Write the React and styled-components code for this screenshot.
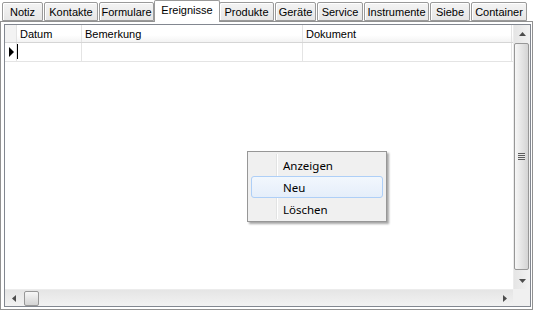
import React from "react";
import styled, { createGlobalStyle } from "styled-components";

const GlobalStyle = createGlobalStyle`
  html, body {
    margin: 0;
    padding: 0;
    background: #ffffff;
  }
  body {
    font-family: "Liberation Sans", Arial, sans-serif;
    font-size: 11px;
    color: #000;
  }
`;

const Page = styled.div`
  position: relative;
  width: 535px;
  height: 311px;
  overflow: hidden;
`;

const TabStrip = styled.div`
  display: flex;
  align-items: flex-end;
  height: 21px;
  padding-left: 2px;
  position: relative;
  z-index: 2;
`;

const Tab = styled.div`
  box-sizing: border-box;
  width: ${(p) => p.$w}px;
  height: ${(p) => (p.$active ? 22 : 19)}px;
  margin: ${(p) => (p.$active ? "0 -1px -1px -1px" : "0 1px 0 0")};
  border: 1px solid #9a9a9a;
  border-bottom: ${(p) => (p.$active ? "none" : "1px solid #9a9a9a")};
  border-radius: 2px 2px 0 0;
  background: ${(p) =>
    p.$active ? "#ffffff" : "linear-gradient(#f4f4f4, #e6e6e6)"};
  box-shadow: ${(p) => (p.$active ? "none" : "inset 1px 1px 0 #ffffff")};
  display: flex;
  align-items: center;
  justify-content: center;
  padding-bottom: ${(p) => (p.$active ? 3 : 0)}px;
  white-space: nowrap;
`;

const Panel = styled.div`
  box-sizing: border-box;
  width: 533px;
  height: 289px;
  border: 1px solid #919191;
  background: #ffffff;
  padding: 2px 1px 2px 3px;
`;

const Grid = styled.div`
  box-sizing: border-box;
  width: 527px;
  height: 283px;
  border: 1px solid #828790;
  display: grid;
  grid-template-columns: 508px 17px;
  grid-template-rows: 264px 17px;
  background: #ffffff;
`;

const Body = styled.div`
  display: flex;
  flex-direction: column;
`;

const Row = styled.div`
  display: grid;
  grid-template-columns: 12px 65px 221px 209px;
  height: ${(p) => (p.$header ? 17 : 18)}px;
  border-bottom: 1px solid ${(p) => (p.$header ? "#d5d5d5" : "#e4e4e4")};
  background: ${(p) =>
    p.$header ? "linear-gradient(#ffffff 60%, #f3f3f3)" : "#ffffff"};
`;

const Cell = styled.div`
  box-sizing: border-box;
  border-right: 1px solid ${(p) => (p.$header ? "#e3e3e3" : "#e4e4e4")};
  padding-left: 3px;
  display: flex;
  align-items: center;
  white-space: nowrap;
  position: relative;
  background: ${(p) => (p.$selector && p.$header ? "#f3f3f3" : "transparent")};
`;

const Pointer = styled.span`
  width: 0;
  height: 0;
  border-top: 5px solid transparent;
  border-bottom: 5px solid transparent;
  border-left: 5px solid #000;
  margin-left: 1px;
`;

const Caret = styled.span`
  position: absolute;
  left: 0;
  top: 1px;
  width: 1px;
  height: 15px;
  background: #000;
`;

const VScroll = styled.div`
  display: flex;
  flex-direction: column;
  background: linear-gradient(90deg, #e5e5e5, #f2f2f2);
  border-left: 1px solid #ececec;
`;

const HScroll = styled.div`
  display: flex;
  align-items: center;
  background: linear-gradient(#e5e5e5, #f2f2f2);
  border-top: 1px solid #ececec;
`;

const Corner = styled.div`
  background: #f0f0f0;
`;

const ArrowBtn = styled.div`
  flex: none;
  width: ${(p) => (p.$h ? 17 : 16)}px;
  height: 17px;
  display: flex;
  align-items: center;
  justify-content: center;
`;

const Thumb = styled.div`
  box-sizing: border-box;
  border: 1px solid #979797;
  border-radius: 2px;
  display: flex;
  align-items: center;
  justify-content: center;
  ${(p) =>
    p.$h
      ? `width: 15px; height: 15px; margin-left: 2px;
         background: linear-gradient(#f7f7f7, #e5e5e5 50%, #d4d4d4);`
      : `width: 15px; margin: 1px 0 1px 0; flex: none; height: 227px;
         background: linear-gradient(90deg, #f7f7f7, #e5e5e5 50%, #d4d4d4);`}
`;

const Track = styled.div`
  flex: 1;
`;

const Gripper = styled.div`
  width: 7px;
  height: 7px;
  background: repeating-linear-gradient(
    #5d5d5d 0,
    #5d5d5d 1px,
    #e8e8e8 1px,
    #e8e8e8 2px
  );
`;

const Menu = styled.div`
  position: absolute;
  left: 247px;
  top: 151px;
  box-sizing: border-box;
  width: 140px;
  height: 71px;
  border: 1px solid #979797;
  background: #f0f0f0;
  box-shadow: 2px 2px 2px rgba(0, 0, 0, 0.35);
  padding: 2px 2px;
  font-family: "Noto Sans", "Open Sans", sans-serif;
  font-size: 11.5px;
  z-index: 5;
`;

const Gutter = styled.div`
  position: absolute;
  left: 28px;
  top: 2px;
  bottom: 2px;
  width: 1px;
  background: #e2e3e3;
  border-right: 1px solid #ffffff;
`;

const MenuItem = styled.div`
  position: relative;
  box-sizing: border-box;
  height: 22px;
  margin: 0 1px;
  padding-left: 31px;
  display: flex;
  align-items: center;
  border: 1px solid ${(p) => (p.$hot ? "#aecff7" : "transparent")};
  border-radius: 3px;
  background: ${(p) =>
    p.$hot ? "linear-gradient(#f2f7fd, #e5eefa)" : "transparent"};
`;

const tabs = [
  ["Notiz", 41],
  ["Kontakte", 54],
  ["Formulare", 55],
  ["Ereignisse", 66, true],
  ["Produkte", 55],
  ["Geräte", 41],
  ["Service", 46],
  ["Instrumente", 65],
  ["Siebe", 40],
  ["Container", 56],
];

function Tri({ dir }) {
  const pts = {
    up: "0,4 7,4 3.5,0",
    down: "0,0 7,0 3.5,4",
    left: "4,0 4,7 0,3.5",
    right: "0,0 0,7 4,3.5",
  }[dir];
  const vertical = dir === "up" || dir === "down";
  return (
    <svg width={vertical ? 7 : 4} height={vertical ? 4 : 7}>
      <polygon points={pts} fill="#4d4d4d" />
    </svg>
  );
}

export default function App() {
  return (
    <Page>
      <GlobalStyle />
      <TabStrip>
        {tabs.map(([label, w, active]) => (
          <Tab key={label} $w={w} $active={active}>
            {label}
          </Tab>
        ))}
      </TabStrip>
      <Panel>
        <Grid>
          <Body>
            <Row $header>
              <Cell $header $selector />
              <Cell $header>Datum</Cell>
              <Cell $header>Bemerkung</Cell>
              <Cell $header>Dokument</Cell>
            </Row>
            <Row>
              <Cell $selector>
                <Pointer />
              </Cell>
              <Cell>
                <Caret />
              </Cell>
              <Cell />
              <Cell />
            </Row>
          </Body>
          <VScroll>
            <ArrowBtn>
              <Tri dir="up" />
            </ArrowBtn>
            <Thumb>
              <Gripper />
            </Thumb>
            <Track />
            <ArrowBtn>
              <Tri dir="down" />
            </ArrowBtn>
          </VScroll>
          <HScroll>
            <ArrowBtn $h>
              <Tri dir="left" />
            </ArrowBtn>
            <Thumb $h />
            <Track />
            <ArrowBtn $h>
              <Tri dir="right" />
            </ArrowBtn>
          </HScroll>
          <Corner />
        </Grid>
      </Panel>
      <Menu>
        <Gutter />
        <MenuItem>Anzeigen</MenuItem>
        <MenuItem $hot>Neu</MenuItem>
        <MenuItem>Löschen</MenuItem>
      </Menu>
    </Page>
  );
}
